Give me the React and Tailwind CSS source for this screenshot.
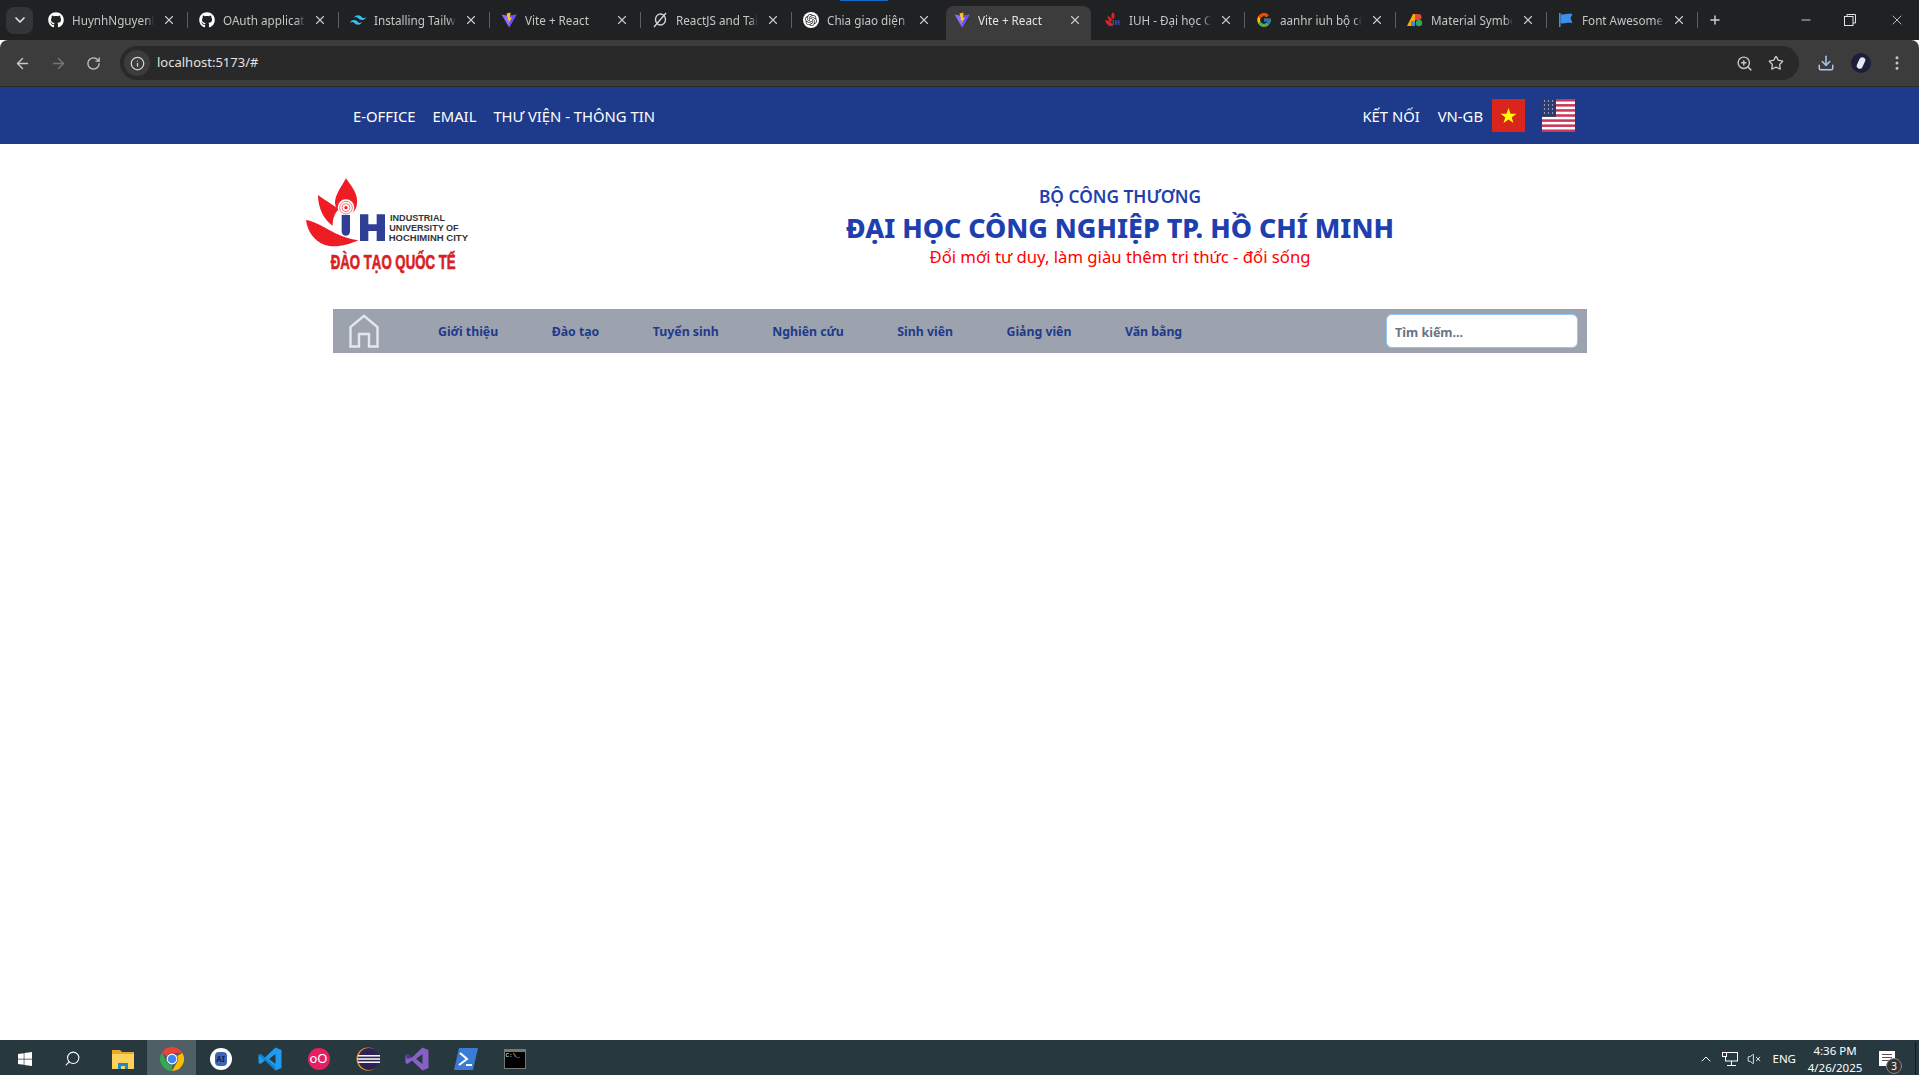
import React from "react";
import {
  ArrowLeft,
  ArrowRight,
  ChevronDown,
  ChevronUp,
  Download,
  Info,
  Minus,
  MoreVertical,
  Plus,
  RotateCw,
  Search,
  Star,
  VolumeX,
  X,
  ZoomIn,
} from "lucide-react";
import { FaGithub, FaWindows } from "react-icons/fa";
import { FcGoogle } from "react-icons/fc";
import { SiOpenai, SiTailwindcss } from "react-icons/si";

const ViteIcon = () => (
  <svg viewBox="0 0 16 16" className="w-4 h-4">
    <path d="M0.5 2.5 L8 4 L15.5 2.5 L8.2 15.5 Z" fill="#8a6cff" />
    <path d="M8 4 L15.5 2.5 L8.2 15.5 Z" fill="#6d4cff" />
    <path d="M9.5 0.5 L5.5 1.5 L7 7 L6 8 L8 8 L7.5 11.5 L11 5.5 L9 5.8 Z" fill="#ffc517" />
  </svg>
);

const SlashIcon = () => (
  <svg viewBox="0 0 16 16" className="w-4 h-4" fill="none" stroke="#d4d4d4" strokeWidth="1.4">
    <ellipse cx="8.5" cy="7.5" rx="5" ry="5.5" />
    <path d="M14 1 L2 15" />
  </svg>
);

const ChatIcon = () => (
  <span className="w-4 h-4 rounded-full bg-white flex items-center justify-center">
    <SiOpenai className="w-3 h-3 text-[#333]" />
  </span>
);

const IuhIcon = () => (
  <svg viewBox="0 0 16 16" className="w-4 h-4">
    <path d="M8 0 C10 2.5 10.5 5 8 7.5 C5.5 5 6 2.5 8 0 Z" fill="#d8232a" />
    <path d="M0 8 C4 8 6 11 9 13 C5 16 1 12.5 0 8 Z" fill="#d8232a" />
    <path d="M2.5 3.5 L7 7 L6 10.5 C3.8 8.8 2.5 6.5 2.5 3.5 Z" fill="#d8232a" />
    <path d="M7.5 8 h1.5 v5 h-1.5 Z M10 8 h1.5 v2 h1.5 v-2 h1.5 v5 h-1.5 v-2 h-1.5 v2 h-1.5 Z" fill="#3a4a9f" />
  </svg>
);

const MaterialIcon = () => (
  <svg viewBox="0 0 16 16" className="w-4 h-4">
    <path d="M0 14 L6 2 L8 2 L8 14 Z" fill="#f9ab00" />
    <path d="M8 2 h3.5 a3 3 0 0 1 0 6 h-3.5 Z" fill="#e8453c" />
    <circle cx="12" cy="11" r="3.2" fill="#34a853" />
    <rect x="4" y="9" width="4" height="5" fill="#4285f4" />
  </svg>
);

const FlagIcon = () => (
  <svg viewBox="0 0 16 16" className="w-4 h-4">
    <path d="M1 1 h1.6 v14 H1 Z" fill="#3b8fe6" />
    <path d="M2.6 2 C6 3.5 9 1 14.5 2 L12.5 6 L14.5 11 C9 10 6 12.5 2.6 11 Z" fill="#3b8fe6" />
  </svg>
);

const tabs = [
  { title: "HuynhNguyenF", icon: <FaGithub className="w-4 h-4 text-white" /> },
  { title: "OAuth applicati", icon: <FaGithub className="w-4 h-4 text-white" /> },
  { title: "Installing Tailwi", icon: <SiTailwindcss className="w-4 h-4 text-[#38bdf8]" /> },
  { title: "Vite + React", icon: <ViteIcon /> },
  { title: "ReactJS and Tai", icon: <SlashIcon /> },
  { title: "Chia giao diện", icon: <ChatIcon /> },
  { title: "Vite + React", icon: <ViteIcon />, active: true },
  { title: "IUH - Đại học C", icon: <IuhIcon /> },
  { title: "aanhr iuh bộ cô", icon: <FcGoogle className="w-4 h-4" /> },
  { title: "Material Symbo", icon: <MaterialIcon /> },
  { title: "Font Awesome", icon: <FlagIcon /> },
];

const Tab = ({ tab, hideSep }) => (
  <div className="relative w-[151px] h-10 flex items-center shrink-0">
    {tab.active && (
      <div className="absolute left-[3px] right-[3px] top-[6px] bottom-0 rounded-t-lg bg-[#3c3c3c]" />
    )}
    <div className="relative ml-[11px] w-4 h-4 flex items-center justify-center shrink-0">{tab.icon}</div>
    <div
      className={`relative ml-2 pt-[2px] w-[82px] overflow-hidden whitespace-nowrap text-[11.7px] [mask-image:linear-gradient(to_right,black_90%,transparent)] ${
        tab.active ? "text-[#e3e3e3]" : "text-[#c4c7c5]"
      }`}
    >
      {tab.title}
    </div>
    <X className="relative ml-2 w-[14px] h-[14px] text-[#c7c7c7] shrink-0" strokeWidth={2} />
    {!hideSep && <div className="ml-auto w-px h-4 bg-[#5c5f61]" />}
  </div>
);

const BrowserChrome = () => (
  <div className="shrink-0">
    <div className="relative h-10 bg-[#1f2122] flex items-center">
      <div className="absolute top-0 left-[840px] w-[48px] h-px bg-[#0b6bcb]" />
      <div className="ml-[6px] mr-1 w-[27px] h-[27px] rounded-lg bg-[#333536] flex items-center justify-center shrink-0">
        <ChevronDown className="w-4 h-4 text-[#e3e3e3]" strokeWidth={2.5} />
      </div>
      {tabs.map((tab, i) => (
        <Tab key={i} tab={tab} hideSep={tab.active || (tabs[i + 1] && tabs[i + 1].active)} />
      ))}
      <Plus className="ml-[10px] w-[14px] h-[14px] text-[#d0d0d0]" strokeWidth={2.5} />
      <div className="ml-auto flex items-center text-[#e3e3e3]">
        <Minus className="w-[14px] h-[14px] mr-[31px]" strokeWidth={1.5} />
        <svg viewBox="0 0 12 12" className="w-3 h-3 mr-[33px]" fill="none" stroke="currentColor">
          <rect x="0.5" y="2.5" width="8.5" height="9" />
          <path d="M3 2.5 V0.5 H11.5 V9 H9" />
        </svg>
        <X className="w-[16px] h-[16px] mr-[14px]" strokeWidth={1.2} />
      </div>
    </div>
    <div className="h-[47px] bg-[#3c3c3c] rounded-t-lg border-b border-[#2a2a2a] flex items-center">
      <ArrowLeft className="ml-[14px] w-[17px] h-[17px] text-[#c7c7c7]" strokeWidth={2} />
      <ArrowRight className="ml-[19px] w-[17px] h-[17px] text-[#757575]" strokeWidth={2} />
      <RotateCw className="ml-[19px] w-[15px] h-[15px] text-[#c7c7c7]" strokeWidth={2} />
      <div className="ml-[19px] w-[1679px] h-[34px] rounded-full bg-[#292929] flex items-center">
        <div className="ml-1 w-[26px] h-[26px] rounded-full bg-[#3c3c3c] flex items-center justify-center">
          <Info className="w-[15px] h-[15px] text-[#d5d5d5]" />
        </div>
        <span className="ml-[7px] text-[13px] text-[#e3e3e3]">localhost:5173/#</span>
        <ZoomIn className="ml-auto w-[17px] h-[17px] text-[#c7c7c7]" />
        <Star className="ml-[15px] mr-[15px] w-[16px] h-[16px] text-[#c7c7c7]" />
      </div>
      <Download className="ml-[18px] w-[18px] h-[18px] text-[#a8c7fa]" strokeWidth={2} />
      <div className="ml-[16px] w-5 h-5 rounded-full bg-[#1a1f3a] flex items-center justify-center overflow-hidden">
        <div className="w-[6px] h-3 rounded-full bg-[#e8e8f0] rotate-[25deg]" />
      </div>
      <MoreVertical className="ml-[17px] w-[18px] h-[18px] text-[#c7c7c7]" />
    </div>
  </div>
);

const IuhLogo = () => (
  <svg viewBox="0 0 600 345" className="w-[200px] h-[115px] shrink-0">
    <path d="M168 40 C185 65 208 90 200 122 C196 140 186 146 170 148 C150 146 138 138 135 115 C134 90 155 65 168 40 Z" fill="#ee1c25" />
    <path d="M84 90 C105 105 125 118 146 132 C134 145 128 160 128 182 C102 165 84 130 84 90 Z" fill="#ee1c25" />
    <path d="M48 165 C95 172 130 215 205 226 C175 240 135 250 105 240 C72 228 52 198 48 165 Z" fill="#ee1c25" />
    <circle cx="168" cy="128" r="25" fill="#fff" />
    <circle cx="168" cy="128" r="19" fill="none" stroke="#e87a80" strokeWidth="3" />
    <circle cx="168" cy="128" r="12" fill="none" stroke="#e87a80" strokeWidth="3" />
    <circle cx="168" cy="128" r="5" fill="#ee1c25" />
    <path d="M155 150 H180 V200 A12 12 0 0 1 155 200 Z" fill="#2f3f96" />
    <path d="M210 148 H235 V178 H260 V148 H285 V228 H260 V198 H235 V228 H210 Z" fill="#2f3f96" />
    <g fill="#33343b" fontFamily="'Liberation Sans', sans-serif" fontWeight="700" fontSize="27">
      <text x="300" y="167" textLength="165" lengthAdjust="spacingAndGlyphs">INDUSTRIAL</text>
      <text x="298" y="197" textLength="208" lengthAdjust="spacingAndGlyphs">UNIVERSITY OF</text>
      <text x="296" y="227" textLength="238" lengthAdjust="spacingAndGlyphs">HOCHIMINH CITY</text>
    </g>
    <text
      x="122"
      y="311"
      textLength="375"
      lengthAdjust="spacingAndGlyphs"
      fill="#d81f26"
      stroke="#d81f26"
      strokeWidth="2"
      fontFamily="'Liberation Sans', sans-serif"
      fontWeight="700"
      fontSize="58"
    >
      ĐÀO TẠO QUỐC TẾ
    </text>
  </svg>
);

const VietnamFlag = () => (
  <svg viewBox="0 0 33 33" className="w-[33px] h-[33px]">
    <rect width="33" height="33" fill="#da251d" />
    <path d="M16.5 7 L19 14.3 L26.5 14.3 L20.5 18.8 L22.7 26 L16.5 21.6 L10.3 26 L12.5 18.8 L6.5 14.3 L14 14.3 Z" fill="#ffff00" transform="translate(3.3 3.3) scale(0.8)" />
  </svg>
);

const UsFlag = () => (
  <svg viewBox="0 0 33 33" className="w-[33px] h-[33px]">
    <rect width="33" height="33" fill="#fff" />
    {[0, 1, 2, 3, 4, 5, 6].map((i) => (
      <rect key={i} y={i * 5.08} width="33" height="2.54" fill="#c8385a" />
    ))}
    <rect width="14" height="17.8" fill="#2a3a6e" />
    {[2, 6, 10].map((x) =>
      [2, 6, 10, 14].map((y) => <circle key={`${x}-${y}`} cx={x + 0.5} cy={y} r="0.7" fill="#c9cfe6" />)
    )}
  </svg>
);

const HomeIcon = () => (
  <svg viewBox="0 0 30 34" className="w-[30px] h-[34px]" fill="none" stroke="#e5e7eb" strokeWidth="2.4">
    <path d="M1.5 32.5 V13 L15 1.8 L28.5 13 V32.5 H20 V20 H10 V32.5 Z" />
  </svg>
);

const menuItems = ["Giới thiệu", "Đào tạo", "Tuyển sinh", "Nghiên cứu", "Sinh viên", "Giảng viên", "Văn bằng"];

const Website = () => (
  <div className="flex-1 bg-white">
    <div className="h-[57px] bg-[#1e3a8a] text-white text-[14.8px] pl-[353px] pr-[344px] flex items-center justify-between">
      <div className="pt-[2px] flex items-center gap-[17px]">
        <a href="#">E-OFFICE</a>
        <a href="#">EMAIL</a>
        <a href="#">THƯ VIỆN - THÔNG TIN</a>
      </div>
      <div className="flex items-center">
        <a href="#" className="pt-[2px] mr-[18px]">KẾT NỐI</a>
        <a href="#" className="pt-[2px] mr-[9px]">VN-GB</a>
        <VietnamFlag />
        <div className="ml-[17px]">
          <UsFlag />
        </div>
      </div>
    </div>

    <div className="h-[165px] pl-[290px] pt-[21px] flex items-start">
      <IuhLogo />
      <div className="w-[1260px] pt-[18px] flex flex-col items-center">
        <div className="text-[17.3px] leading-[28px] font-semibold text-[#1e40af]">BỘ CÔNG THƯƠNG</div>
        <div className="text-[26.8px] leading-[33px] font-extrabold text-[#1e40af]">ĐẠI HỌC CÔNG NGHIỆP TP. HỒ CHÍ MINH</div>
        <div className="text-[16.7px] leading-[26px] text-[#ff0000]">Đổi mới tư duy, làm giàu thêm tri thức - đổi sống</div>
      </div>
    </div>

    <div className="ml-[333px] w-[1254px] h-[44px] bg-[#9ca3af] flex items-center">
      <div className="ml-4 mr-[59px]">
        <HomeIcon />
      </div>
      <div className="pt-[2px] flex items-center gap-[53.5px]">
        {menuItems.map((item) => (
          <a key={item} href="#" className="text-[12.3px] font-bold text-[#1e3a8a] whitespace-nowrap">
            {item}
          </a>
        ))}
      </div>
      <input
        placeholder="Tìm kiếm..."
        className="ml-auto mr-[9px] w-[192px] h-[34px] rounded-md bg-white border border-[#93c5fd] px-2 pt-[2px] text-[12.5px] font-bold placeholder:text-[#6b7280] outline-none"
      />
    </div>
  </div>
);

const TaskIcon = ({ active, children }) => (
  <div className={`w-[49px] h-full pt-[2px] flex items-center justify-center shrink-0 ${active ? "bg-[#4f5f66]" : ""}`}>
    {children}
  </div>
);

const Taskbar = () => (
  <div className="h-[35px] bg-[#27393f] flex items-center shrink-0 text-white">
    <TaskIcon>
      <FaWindows className="w-4 h-4" />
    </TaskIcon>
    <TaskIcon>
      <Search className="w-[17px] h-[17px] -scale-x-100 -translate-x-px" strokeWidth={1.5} />
    </TaskIcon>
    <TaskIcon>
      <svg viewBox="0 0 22 20" className="w-[22px] h-5">
        <path d="M0 1 h8 l2 2 h12 v3 H0 Z" fill="#e5a92b" />
        <rect y="5" width="22" height="15" fill="#fbd35c" />
        <path d="M6 20 V14 H16 V20 H13 V17 H9 V20 Z" fill="#1f88c9" />
      </svg>
    </TaskIcon>
    <TaskIcon active>
      <svg viewBox="0 0 24 24" className="w-6 h-6">
        <path d="M12 0 A12 12 0 0 1 22.4 6 H12 A6 6 0 0 0 6.8 9 L1.8 5.8 A12 12 0 0 1 12 0 Z" fill="#ea4335" />
        <path d="M22.4 6 A12 12 0 0 1 12 24 L17.2 15 A6 6 0 0 0 17.2 9 Z" fill="#fbbc04" />
        <path d="M12 24 A12 12 0 0 1 1.8 5.8 L6.8 15 A6 6 0 0 0 12 18 Z" fill="#34a853" />
        <circle cx="12" cy="12" r="5.4" fill="#fff" />
        <circle cx="12" cy="12" r="4.3" fill="#4285f4" />
      </svg>
    </TaskIcon>
    <TaskIcon>
      <div className="w-[22px] h-[22px] rounded-full bg-white flex items-center justify-center">
        <div className="w-3 h-[14px] rounded-sm bg-[#3c66b5] text-[8px] leading-[14px] text-center font-bold text-[#10204a]">AI</div>
      </div>
    </TaskIcon>
    <TaskIcon>
      <svg viewBox="0 0 24 24" className="w-6 h-6">
        <path d="M17.5 0.5 L23.5 3 V21 L17.5 23.5 L7 13.5 L2.5 17 L0.5 16 V8 L2.5 7 L7 10.5 Z M17.5 7 L11 12 L17.5 17 Z" fill="#1f9cf0" fillRule="evenodd" />
        <path d="M0.5 8 L2.5 7 L17.5 20 V23.5 L0.5 8 Z" fill="#0a6fb3" opacity="0.6" />
      </svg>
    </TaskIcon>
    <TaskIcon>
      <div className="w-[22px] h-[22px] rounded-full bg-[#e81e63] flex items-center justify-center text-[13px] leading-none text-white">oO</div>
    </TaskIcon>
    <TaskIcon>
      <svg viewBox="0 0 24 24" className="w-6 h-6">
        <circle cx="12" cy="12" r="11.5" fill="#f7941e" />
        <circle cx="13" cy="12" r="11" fill="#2c2255" />
        <rect x="2" y="8" width="22" height="1.6" fill="#f4f4f4" />
        <rect x="1.5" y="11.2" width="23" height="1.6" fill="#f4f4f4" />
        <rect x="2" y="14.4" width="22" height="1.6" fill="#f4f4f4" />
      </svg>
    </TaskIcon>
    <TaskIcon>
      <svg viewBox="0 0 24 24" className="w-6 h-6">
        <path d="M17.5 0.5 L23.5 3 V21 L17.5 23.5 L7 13.5 L2.5 17 L0.5 16 V8 L2.5 7 L7 10.5 Z M17.5 7 L11 12 L17.5 17 Z" fill="#8661c5" fillRule="evenodd" />
        <path d="M0.5 8 L2.5 7 L7 10.5 L2.5 12 Z" fill="#5c2d91" />
      </svg>
    </TaskIcon>
    <TaskIcon>
      <svg viewBox="0 0 24 22" className="w-6 h-[22px]">
        <path d="M5 0 H24 L19 22 H0 Z" fill="#3a7bd5" />
        <path d="M6 5 L13 11 L5 17" fill="none" stroke="#fff" strokeWidth="2" />
        <path d="M12 17 H18" stroke="#fff" strokeWidth="2" />
      </svg>
    </TaskIcon>
    <TaskIcon>
      <div className="w-[22px] h-5 bg-black border border-[#777] border-t-[3px] text-[6px] leading-[8px] pl-px font-mono">C:\_</div>
    </TaskIcon>

    <div className="ml-auto flex items-center h-full pt-[2px]">
      <ChevronUp className="w-4 h-4" strokeWidth={1.5} />
      <svg viewBox="0 0 16 14" className="ml-2 w-4 h-[14px]" fill="none" stroke="#fff">
        <rect x="3.5" y="0.5" width="12" height="8.5" />
        <rect x="0.5" y="0.5" width="4" height="4" fill="#27393f" />
        <path d="M9.5 9 V13 M5 13.5 H14" />
      </svg>
      <VolumeX className="ml-[9px] w-[14px] h-[14px]" strokeWidth={1.5} />
      <span className="ml-[11px] text-[11.5px]">ENG</span>
      <div className="ml-[13px] w-[52px] flex flex-col items-center text-[11.5px] leading-[17px] whitespace-nowrap">
        <span>4:36 PM</span>
        <span>4/26/2025</span>
      </div>
      <div className="relative ml-[18px] w-4 h-[15px] bg-white flex flex-col gap-[2px] pt-[3px] px-[3px]">
        <div className="h-px bg-[#555]" />
        <div className="h-px bg-[#555]" />
        <div className="h-px bg-[#555]" />
        <div className="absolute -right-[7px] -bottom-[8px] w-4 h-4 rounded-full bg-[#333] border border-[#888] text-[10px] leading-[14px] text-center">3</div>
      </div>
      <div className="ml-5 mr-[3px] w-px h-[33px] bg-[#101a1e]" />
    </div>
  </div>
);

export default function App() {
  return (
    <div className="h-[1075px] flex flex-col overflow-hidden font-['Noto_Sans',sans-serif]">
      <BrowserChrome />
      <Website />
      <Taskbar />
    </div>
  );
}
